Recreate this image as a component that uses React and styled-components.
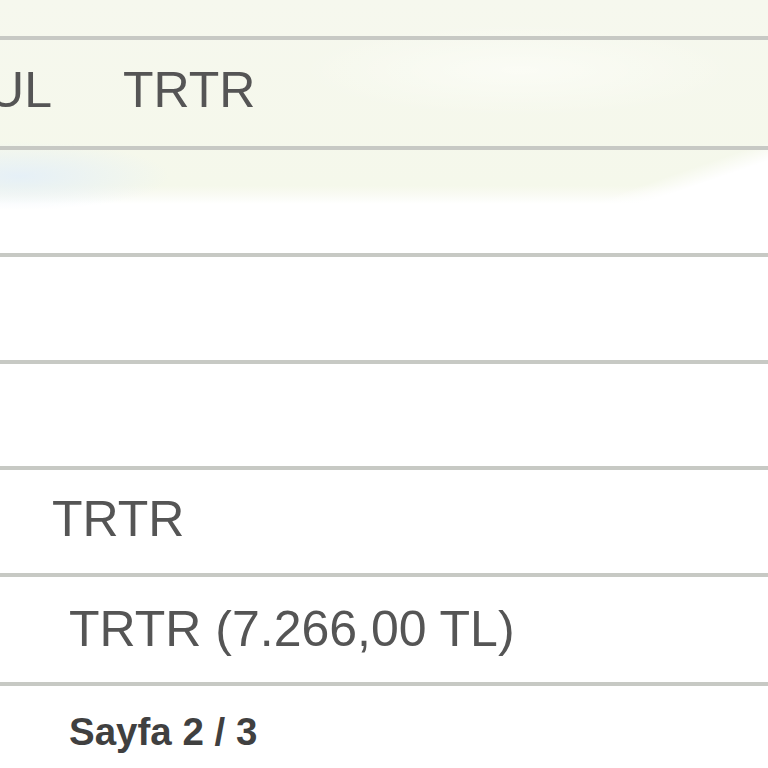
import React from "react";
import styled, { createGlobalStyle } from "styled-components";

const Global = createGlobalStyle`
  html, body {
    margin: 0;
    padding: 0;
    background: #ffffff;
  }
  body {
    font-family: "Liberation Sans", Arial, Helvetica, sans-serif;
  }
`;

/* Sheet with the pale cream wash across the top, a white sweep on the right
   and a soft blue tint at the left */
const Sheet = styled.div`
  width: 768px;
  height: 768px;
  overflow: hidden;
  background:
    radial-gradient(150px 34px at 20px 176px, rgba(228, 239, 248, 0.9), rgba(228, 239, 248, 0)),
    linear-gradient(161deg, rgba(255, 255, 255, 0) 0, rgba(255, 255, 255, 0) 384px, #ffffff 402px),
    radial-gradient(220px 46px at 520px 70px, rgba(255, 255, 252, 0.55), rgba(255, 255, 252, 0)),
    linear-gradient(180deg, #f6f8ee 0, #f5f8eb 186px, #fafbf5 196px, #ffffff 204px);
`;

const TopStrip = styled.div`
  height: 36px;
`;

const Row = styled.div`
  display: flex;
  align-items: center;
  height: ${(p) => p.$h}px;
  padding-left: ${(p) => p.$indent || 0}px;
  border-top: 4px solid #c7c9c4;
  box-sizing: content-box;
`;

const Cell = styled.div`
  font-size: 50px;
  line-height: normal;
  color: #555555;
  white-space: nowrap;
  margin-top: ${(p) => p.$shift || 0}px;
`;

/* Column whose text runs past the sheet's left edge */
const CutCell = styled(Cell)`
  display: flex;
  justify-content: flex-end;
  width: 52px;
  flex: none;
  margin-right: 71px;
`;

const Footer = styled.div`
  border-top: 4px solid #c7c9c4;
  padding: 24px 0 0 69px;
`;

const PageNo = styled.div`
  font-size: 38.5px;
  font-weight: 700;
  color: #404040;
  line-height: normal;
`;

export default function App() {
  return (
    <>
      <Global />
      <Sheet>
        <TopStrip />
        <Row $h={106}>
          <CutCell $shift={-6}>UL</CutCell>
          <Cell $shift={-6}>TRTR</Cell>
        </Row>
        <Row $h={103} />
        <Row $h={103} />
        <Row $h={102} />
        <Row $h={103} $indent={52}>
          <Cell $shift={-6}>TRTR</Cell>
        </Row>
        <Row $h={105} $indent={69}>
          <Cell $shift={-2}>TRTR (7.266,00 TL)</Cell>
        </Row>
        <Footer>
          <PageNo>Sayfa 2 / 3</PageNo>
        </Footer>
      </Sheet>
    </>
  );
}
